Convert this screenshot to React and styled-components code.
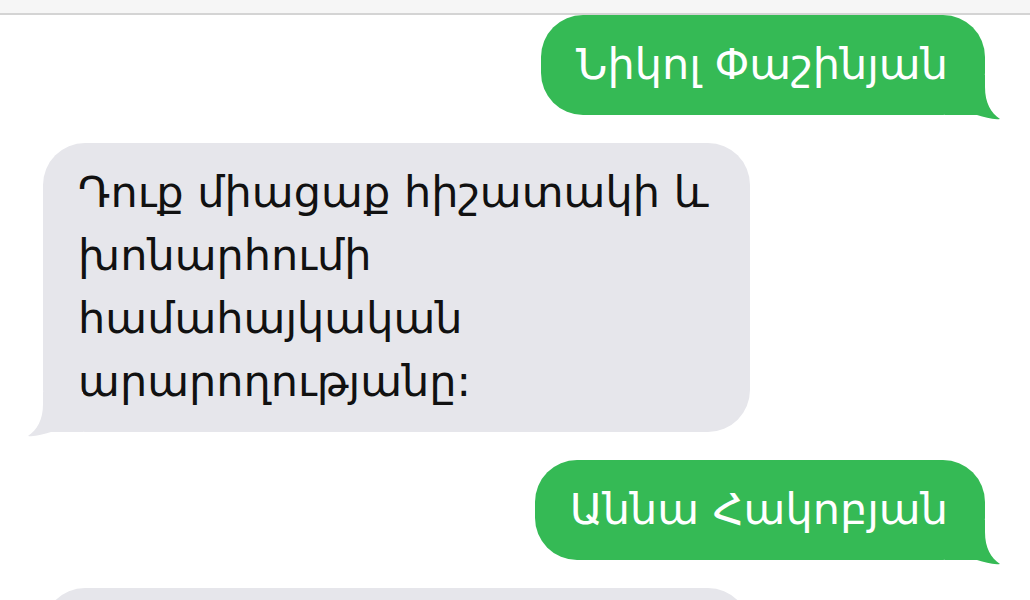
import React from 'react';
import styled, { createGlobalStyle } from 'styled-components';

const GlobalStyle = createGlobalStyle`
  html, body {
    margin: 0;
    padding: 0;
    background: #ffffff;
    overflow: hidden;
  }
  body {
    font-family: "DejaVu Sans", "Noto Sans", sans-serif;
  }
`;

const green = '#35ba55';
const gray = '#e6e6eb';

const Screen = styled.div`
  width: 1030px;
  height: 600px;
  display: flex;
  flex-direction: column;
  background: #ffffff;
`;

const TopBar = styled.div`
  height: 13px;
  flex-shrink: 0;
  background: #f6f6f6;
  border-bottom: 2px solid #d4d4d4;
`;

const Thread = styled.div`
  display: flex;
  flex-direction: column;
  gap: 28px;
  padding: 0 45px 0 43px;
`;

const Row = styled.div`
  display: flex;
  justify-content: ${p => (p.$mine ? 'flex-end' : 'flex-start')};
`;

const Bubble = styled.div`
  position: relative;
  max-width: 707px;
  box-sizing: border-box;
  padding: 18px 37px 19px 35px;
  border-radius: 42px;
  background: ${p => (p.$mine ? green : gray)};
  color: ${p => (p.$mine ? '#ffffff' : '#111111')};
  font-size: 43px;
  line-height: 63px;
`;

const Tail = styled.svg`
  position: absolute;
  bottom: -5px;
  width: 56px;
  height: 45px;
  ${p => (p.$mine ? 'right: -16px;' : 'left: -16px; transform: scaleX(-1);')}
`;

const BubbleTail = ({ mine }) => (
  <Tail $mine={mine} viewBox="-40 -40 56 45">
    <path
      d="M -40 0 L -40 -40 L 0 -40 L 0 -28 C 0 -12 6 -2 15 4 C 8 5 0 2 -8 0 Z"
      fill={mine ? green : gray}
    />
  </Tail>
);

const messages = [
  { mine: true, text: 'Նիկոլ Փաշինյան' },
  { mine: false, text: 'Դուք միացաք հիշատակի և խոնարհումի համահայկական արարողությանը:' },
  { mine: true, text: 'Աննա Հակոբյան' },
  { mine: false, text: 'Դուք միացաք հիշատակի և խոնարհումի համահայկական արարողությանը:' },
];

export default function App() {
  return (
    <Screen>
      <GlobalStyle />
      <TopBar />
      <Thread>
        {messages.map((m, i) => (
          <Row key={i} $mine={m.mine}>
            <Bubble $mine={m.mine}>
              {m.text}
              <BubbleTail mine={m.mine} />
            </Bubble>
          </Row>
        ))}
      </Thread>
    </Screen>
  );
}
